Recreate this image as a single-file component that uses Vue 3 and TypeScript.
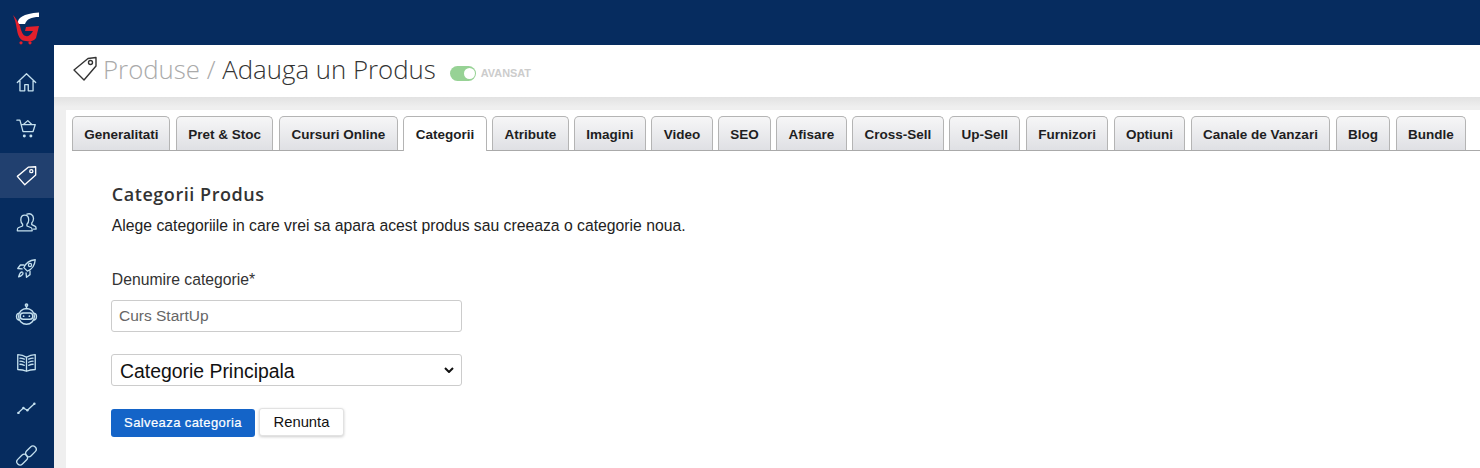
<script setup lang="ts">
const tabs = [
  { label: 'Generalitati', width: 98.1 },
  { label: 'Pret & Stoc', width: 97.4 },
  { label: 'Cursuri Online', width: 118.7 },
  { label: 'Categorii', width: 83.4 },
  { label: 'Atribute', width: 76.4 },
  { label: 'Imagini', width: 71.4 },
  { label: 'Video', width: 61.4 },
  { label: 'SEO', width: 52.4 },
  { label: 'Afisare', width: 70.4 },
  { label: 'Cross-Sell', width: 91.4 },
  { label: 'Up-Sell', width: 71.1 },
  { label: 'Furnizori', width: 82.4 },
  { label: 'Optiuni', width: 71.4 },
  { label: 'Canale de Vanzari', width: 139.4 },
  { label: 'Blog', width: 54.4 },
  { label: 'Bundle', width: 70 }
]
</script>

<template>
  <div class="app">
    <aside class="side">
      <div class="logo">
        <svg width="30" height="34" viewBox="0 0 30 34">
          <path d="M7 12C6 6 12 1.500 28 .5L28 5C20 5 16 7 14 12Z" fill="#fff"/>
          <path d="M2 3C5 6 7 10 9 14C10 19 12 24 15 24C18 25 20 22 22 19L14 19L15 15L28 14L25 26C23 29 19 30 15 29C9 29 7 24 6 18C5 12 4 7 2 3Z" fill="#e2202c"/>
          <circle cx="10" cy="30.800" r="1.600" fill="#e2202c"/><circle cx="19" cy="30.800" r="1.600" fill="#e2202c"/>
        </svg>
      </div>
      <nav class="nav">
        <a class="item"><svg viewBox="0 0 24 24"><path d="M1.500 12 12 2l10.500 10M4.500 10v11.500h5.500v-7h4v7h5.500V10"/></svg></a>
        <a class="item"><svg viewBox="0 0 24 24"><path d="M1 2.500h3.500l3.500 13h11.500L22 7.500H6M8.500 7.500 13.500 3 18 7.500"/><circle cx="9.500" cy="20.500" r="1.700" class="fill"/><circle cx="17" cy="20.500" r="1.700" class="fill"/></svg></a>
        <a class="item active"><svg viewBox="0 0 24 24" class="tag"><path d="M1.500 13 14 2.500l8.500-.5 0 9.500L10 22.500Z"/><circle cx="17.500" cy="7" r="1.800"/></svg></a>
        <a class="item"><svg viewBox="0 0 24 24"><path d="M10 3.500c3 0 4.500 2.500 4.500 5.500 0 2.500-1 4-2 5v2l5 2c1 .5 1 1.500 1 3.500H1.500c0-2 0-3 1-3.500l5-2v-2c-1-1-2-2.500-2-5C5.500 6 7 3.500 10 3.500Z"/><path d="M12.500 2.500c3.500-1.500 7.500.5 7.500 5 0 2.500-1 4-2 5v2l4 2c1 .5 1 1.500 1 3h-3"/></svg></a>
        <a class="item"><svg viewBox="0 0 24 24"><path d="M9 11C11 6 16 2.500 22 2 21.500 8 18 13 13 15L9 11ZM9 8H5l-3 4 5 .5M16 15v4l-4 3-.5-5M7 16c-2 0-3 2-4 5.500 3-1 5-2 5-4.500"/><circle cx="16" cy="8" r="1.800"/></svg></a>
        <a class="item robot"><svg viewBox="0 0 24 24"><circle cx="12" cy="2.200" r="1.200"/><path d="M12 3.500v2.500M3.800 14a8.200 8.200 0 0 1 16.400 0 7.500 7.500 0 0 1-16.400 0ZM3.500 10.800C1 11.500 1 17 3.500 17.800M20.500 10.800c2.500.7 2.500 6.200 0 7"/><rect x="5.500" y="10.500" width="13" height="6.500" rx="3"/><circle cx="9" cy="13.800" r=".9" class="fill"/><circle cx="15" cy="13.800" r=".9" class="fill"/></svg></a>
        <a class="item"><svg viewBox="0 0 24 24"><path d="M12 6C9 4 5 3 2 3v17c4 0 7 .5 10 2 3-1.500 6-2 10-2V3C19 3 15 4 12 6ZM12 6v16M4.500 7c2 0 3.500.5 5 1.200M4.500 10.500c2 0 3.500.5 5 1.200M4.500 14c2 0 3.500.5 5 1.200M19.500 7c-2 0-3.500.5-5 1.200M19.500 10.500c-2 0-3.500.5-5 1.200M19.500 14c-2 0-3.500.5-5 1.200"/></svg></a>
        <a class="item"><svg viewBox="0 0 24 24"><path d="M2.500 17 8.500 11.500 13 14 21 6.500"/><circle cx="2.800" cy="17" r="1.400" class="fill"/><circle cx="8.500" cy="11.500" r="1.400" class="fill"/><circle cx="13" cy="14" r="1.400" class="fill"/><circle cx="21" cy="6.500" r="1.400" class="fill"/></svg></a>
        <a class="item"><svg viewBox="0 0 24 24"><rect x="10" y="3.500" width="14" height="7.500" rx="3.750" transform="rotate(-45 17 7.250)"/><rect x="0" y="13" width="14" height="7.500" rx="3.750" transform="rotate(-45 7 16.750)"/></svg></a>
      </nav>
    </aside>
    <div class="main">
      <div class="topbar"></div>
      <header class="head">
        <svg class="head-icon" viewBox="0 0 26 26" width="26" height="26"><path d="M1 14 15 2.500 23 1.500 23 10 11 24Z"/><circle cx="17.500" cy="6.500" r="2"/></svg>
        <h1 class="title"><span class="muted">Produse / </span>Adauga un Produs</h1>
        <span class="toggle"><span class="knob"></span></span>
        <span class="adv">AVANSAT</span>
      </header>
      <div class="body">
        <section class="panel">
          <ul class="tabs">
            <li v-for="t in tabs" :key="t.label" class="tab" :class="{ on: t.label === 'Categorii' }" :style="{ width: t.width + 'px' }">{{ t.label }}</li>
          </ul>
          <div class="form">
            <h2 class="h">Categorii Produs</h2>
            <p class="desc">Alege categoriile in care vrei sa apara acest produs sau creeaza o categorie noua.</p>
            <label class="lab" for="cat">Denumire categorie*</label>
            <input id="cat" class="inp" type="text" value="Curs StartUp" />
            <select class="sel"><option>Categorie Principala</option></select>
            <div class="btns">
              <button class="btn primary">Salveaza categoria</button>
              <button class="btn ghost">Renunta</button>
            </div>
          </div>
        </section>
      </div>
    </div>
  </div>
</template>

<style>
html, body { margin: 0; overflow: hidden; }
</style>

<style scoped>
.app { display: flex; width: 1480px; height: 468px; overflow: hidden; font-family: "Liberation Sans", Arial, sans-serif; background: #ececec; }
.side { width: 54px; flex: none; background: #062c5f; }
.logo { height: 59.600px; display: flex; justify-content: center; padding: 12px 2px 0 0; box-sizing: border-box; }
.nav { display: flex; flex-direction: column; gap: 1.700px; }
.item { height: 45px; flex: none; display: flex; align-items: center; justify-content: center; padding-right: 1px; box-sizing: border-box; }
.item.active { background: #21406f; }
.item svg { width: 21px; height: 21px; fill: none; stroke: #c4e0ee; stroke-width: 1.500; stroke-linejoin: round; stroke-linecap: round; }
.item svg .fill { fill: #c4e0ee; stroke: none; }
.item svg.tag { stroke: #fff; }
.item.robot svg { width: 23px; height: 23px; margin-top: -3px; }
.main { flex: 1; min-width: 0; display: flex; flex-direction: column; }
.topbar { height: 45px; background: #062c5f; flex: none; }
.head { height: 52px; flex: none; background: #fff; display: flex; align-items: center; box-sizing: border-box; padding: 0 0 2px 19px; }
.head-icon { fill: none; stroke: #333; stroke-width: 1.400; stroke-linejoin: round; margin-right: 4px; margin-top: -3px; }
.title { margin: 0 14px 0 0; font: 300 25.800px/1 "Open Sans", sans-serif; color: #333; }
.muted { color: #aaa; }
.toggle { width: 26px; height: 15px; border-radius: 8px; background: #97d295; position: relative; margin: 6px 5px 0 0; }
.knob { position: absolute; right: 1px; top: 2px; width: 11px; height: 11px; border-radius: 50%; background: #fff; }
.adv { font-size: 10.900px; font-weight: 700; color: #ccc; margin-top: 6px; }
.body { flex: 1; padding: 13px 0 0 12px; background: linear-gradient(#e2e2e2, #efefef 10px); }
.panel { background: #fff; height: 100%; padding: 6px 0 0 6.300px; box-sizing: border-box; }
.tabs { list-style: none; margin: 0; padding: 0; display: flex; gap: 5.600px; height: 35px; border-bottom: 1px solid #aaa; box-sizing: border-box; }
.tab { flex: none; height: 34px; box-sizing: border-box; text-align: center; border: 1px solid #b4b4b4; border-bottom: 0; border-radius: 5px 5px 0 0; background: linear-gradient(#f6f6f7, #dfe0e4); font-size: 13.500px; font-weight: 700; line-height: 35px; color: #1e1e22; white-space: nowrap; }
.tab.on { background: #fff; height: 35px; }
.form { padding: 32px 0 0 38.700px; display: flex; flex-direction: column; align-items: flex-start; }
.h { margin: 0 0 0 .8px; font: 600 18px/22px "Open Sans", sans-serif; color: #333; letter-spacing: .55px; }
.desc { margin: 11px 0 0 .8px; font-size: 15.740px; line-height: 20px; color: #222; }
.lab { margin: 34px 0 0 .8px; font-size: 15.740px; line-height: 20px; color: #333; }
.inp { margin-top: 10px; width: 351px; height: 32px; box-sizing: border-box; padding: 0 7px; border: 1px solid #ccc; border-radius: 3px; font: 15.500px "Liberation Sans", sans-serif; color: #666; outline: 0; }
.sel { margin-top: 22px; width: 351px; height: 32px; box-sizing: border-box; padding: 2px 0 0 8px; border: 1px solid #ccc; border-radius: 3px; font: 19.400px "Liberation Sans", sans-serif; color: #111; appearance: none; background: #fff url("data:image/svg+xml,%3Csvg xmlns='http://www.w3.org/2000/svg' width='10' height='6'%3E%3Cpath d='M1 1l4 4 4-4' fill='none' stroke='%23111' stroke-width='2'/%3E%3C/svg%3E") no-repeat right 7px center; }
.btns { margin-top: 23px; display: flex; align-items: flex-start; gap: 4px; }
.btn { box-sizing: border-box; font: 13px "Liberation Sans", sans-serif; border-radius: 3px; cursor: pointer; }
.primary { width: 144px; height: 28px; padding-bottom: 2px; background: #1464c8; border: 0; color: #fff; letter-spacing: .4px; -webkit-text-stroke: .2px #fff; }
.ghost { width: 85px; height: 28px; margin-top: -1px; background: #fff; border: 1px solid #e2e2e2; color: #111; font-size: 14.800px; box-shadow: 0 1px 3px rgba(0,0,0,.2); }
</style>
